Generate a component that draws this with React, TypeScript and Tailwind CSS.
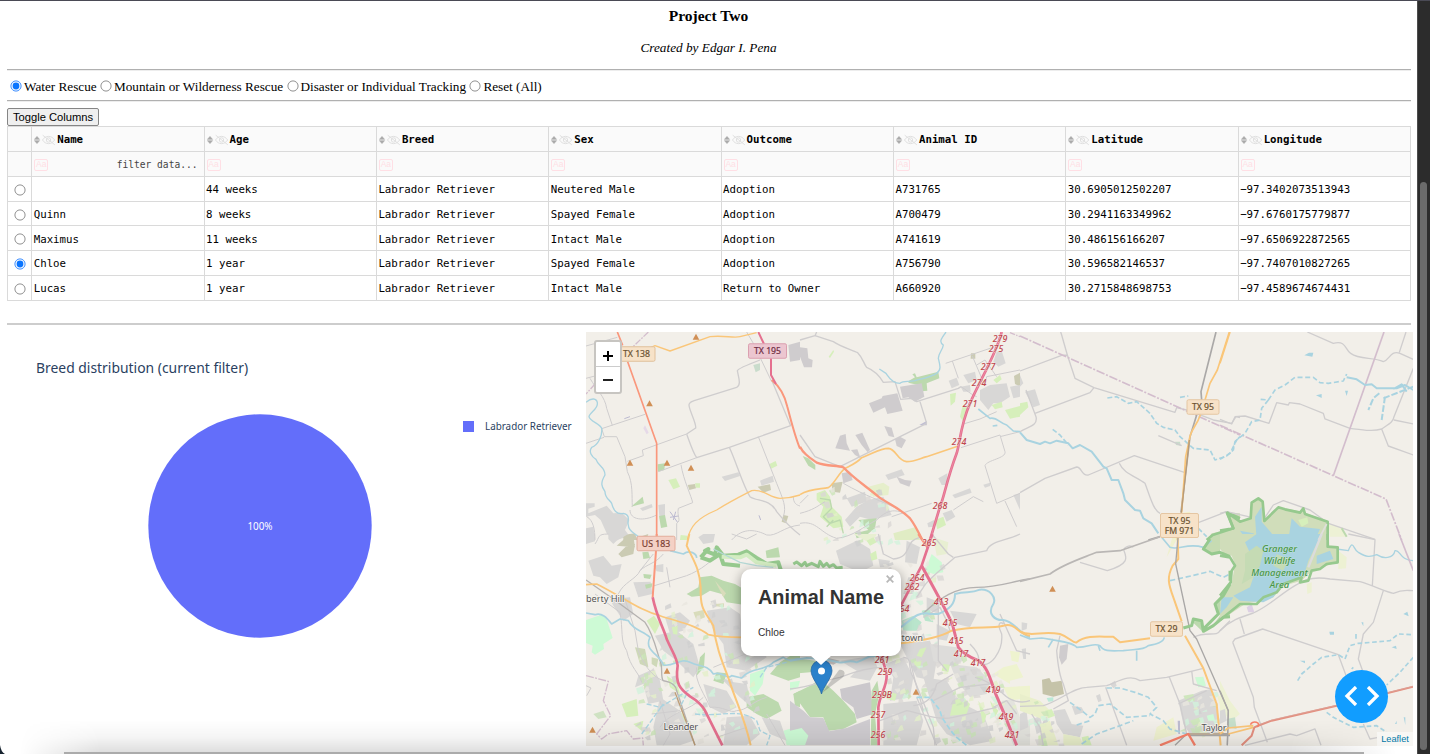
import React from 'react';

type Line = [string, string, number, string?];
type Area = [string, string];

const GREY = '#d8d7d6';
const DARKGREY = '#cfccce';
const GREEN = '#bcd9ae';
const LIME = '#d6efbb';
const MINT = '#cdfad5';
const KHAKI = '#cbcbb3';
const MINOR = '#cfcdce';
const WATER = '#a9d3e0';
const MOTOR = '#e5708f';
const TRUNK = '#fa977c';
const PRIM = '#fac679';
const ADMIN = '#d3bdcd';
const RAIL = '#a9a7a6';
const RESERVE = '#96c98e';

interface TileData {
  x: number;
  y: number;
  areas: Area[];
  lines: Line[];
}

const tiles: TileData[] = [
  {
    x: 580, y: 320,
    areas: [
      ['M625 75 660 65V120L630 125Z', DARKGREY],
      ['M520 135 540 130V150L527 157Z', '#c9dccc'],
      ['M233 433 255 430 253 450 234 455Z', GREEN],
      ['M265 480 288 475 300 500 280 508Z', LIME],
      ['M323 495 345 492 348 505 328 510Z', KHAKI],
      ['M345 490 360 490V503H348Z', LIME],
      ['M425 470 475 457 480 468 435 483Z', GREY],
      ['M540 482 578 467 582 485 545 497Z', GREY],
      ['M567 433 587 423 592 437 573 446Z', LIME],
      ['M533 500 570 493 573 510 550 518Z', KHAKI],
      ['M153 560 188 530 192 550Z', GREEN],
      ['M180 565 215 552 218 562 188 573Z', GREY],
      ['M235 555 255 552V590L238 588Z', GREY],
      ['M237 588 255 585 262 620 243 624Z', GREEN],
      ['M18 550 44 550V560L25 566V580L80 557 100 580 125 578 148 600 135 630 150 650 100 660 80 640 62 600 45 585 18 590Z', GREY],
      ['M18 625 40 620 45 660H18Z', GREY],
      ['M130 645 165 640 172 660H130Z', KHAKI],
      ['M610 585 625 588 618 610 605 605Z', KHAKI],
      ['M195 316 206 338 200 343 190 325Z', '#e6d9e8'],
      ['M302 645 322 647 320 660H300Z', LIME],
    ],
    lines: [
      ['M18 78 112 52M18 175 45 168M30 175C50 210 75 230 80 265L97 316M65 326 195 283M65 326 73 350H110L135 410 142 455C160 490 155 530 157 560M18 370 72 352M142 424 190 407 187 390 320 342', MINOR, 3],
      ['M320 342 347 324C350 310 327 270 327 255C327 245 335 245 345 241L470 202C485 195 475 170 472 152C475 145 500 135 540 120M320 342C330 370 340 400 350 413L448 382 632 317 575 180M448 382C470 430 490 500 510 530C530 545 570 535 590 575C610 600 640 630 660 645', MINOR, 4],
      ['M235 455 350 413M303 434C310 480 335 530 338 548L295 565C290 590 305 600 290 610V660M535 350 590 490C610 540 620 560 610 590M455 660C490 620 530 630 560 645C590 650 610 620 660 615M500 36 520 70 575 185M150 570C150 600 190 605 230 585M640 530C640 550 650 555 660 558M20 590C40 600 45 630 45 660', MINOR, 3],
      ['M18 247C35 232 50 235 52 248C55 268 30 275 27 290C30 305 60 310 65 325C68 345 55 375 35 382C25 395 35 410 48 418C55 440 75 440 75 465C60 490 65 500 75 515C75 535 90 540 95 550C100 570 110 585 130 580C155 585 140 605 145 615C145 635 165 640 175 650', WATER, 4],
      ['M205 36 155 84M45 192 18 222', ADMIN, 4, '20 4 5 4'],
      ['M195 90 225 77 270 93 390 50C430 45 460 55 480 50L530 38M322 660C330 620 350 595 410 570C450 545 490 525 515 512C550 505 570 535 600 535C630 535 645 530 660 525', PRIM, 4],
      ['M112 36 128 76M143 125 230 370V660', TRUNK, 5],
      ['M575 180C600 200 615 230 622 260 635 310 645 350 660 386', TRUNK, 6],
      ['M535 36 552 72M573 115V165L588 192', MOTOR, 6],
      ['M270 575 292 606M270 592 295 588M280 600 287 575M133 296 150 290M537 586 542 600', '#bbb9d0', 3],
    ],
  },
  {
    x: 800, y: 320,
    areas: [
      ['M0 82 22 85 25 115 38 120 36 142 12 142 0 110Z', DARKGREY],
      ['M86 110 100 90 102 95 90 114Z', LIME],
      ['M327 182 345 172 337 163 345 160 350 172 415 155 418 175 380 190 382 212 366 214 355 195 325 188Z', GREEN],
      ['M300 200 365 190 373 230 345 245 325 232 308 235Z', DARKGREY],
      ['M207 250 245 235 248 228 292 220 308 272 262 282 255 262 220 278Z', DARKGREY],
      ['M106 385 120 347 137 342 140 370 150 392Z', DARKGREY],
      ['M166 345 187 338 210 390 203 397 185 375Z', DARKGREY],
      ['M153 390 172 388 182 415 165 405Z', DARKGREY],
      ['M253 318 275 323 283 352 266 348Z', DARKGREY],
      ['M285 358 300 350 318 360 305 385 290 378Z', DARKGREY],
      ['M256 465 305 448 314 465 265 480Z', GREY],
      ['M290 470 315 480 335 482 328 500 300 490Z', DARKGREY],
      ['M358 315 380 303 380 316Z', '#bfbdd3'],
      ['M8 408 25 415 46 435 46 450 25 437Z', GREEN],
      ['M125 460 150 455 158 480 130 490Z', DARKGREY],
      ['M95 490 128 485 120 518 97 515Z', KHAKI],
      ['M50 520 75 510 90 530 95 560 125 590 130 620 100 625 60 590 70 560 50 540Z', LIME],
      ['M140 535 195 515 200 545 155 560Z', GREY],
      ['M205 540 250 530 275 585 215 600 180 590 150 620 135 600 170 560Z', GREY],
      ['M175 600 230 595 225 625 200 645 170 655 165 640 205 630Z', GREEN],
      ['M205 500 250 488 268 500 265 525 220 530Z', '#e6efcb'],
      ['M280 640 350 620 360 660H285Z', '#e0ecc4'],
      ['M446 182 470 173 478 195 455 205Z', GREY],
      ['M490 165 525 155 530 180 505 190Z', GREY],
      ['M482 200 510 195 512 215 490 215Z', GREY],
      ['M450 222 468 218 465 245 452 257Z', LIME],
      ['M487 260 505 255 490 305 480 290Z', LIME],
      ['M513 100 526 100V116H512Z', KHAKI],
      ['M590 95 605 92 617 130 595 140 580 125Z', GREY],
      ['M540 210 570 195 620 190 630 230 600 250 580 250 565 270 540 240Z', GREY],
      ['M580 180 600 165 605 178 590 190Z', LIME],
      ['M615 270 660 258V290L630 296Z', LIME],
      ['M575 255 605 245 608 262 585 268Z', LIME],
      ['M642 168 660 158V200L645 192Z', KHAKI],
      ['M630 200 660 195V230L640 235Z', GREY],
      ['M457 525 510 505 515 518 465 535Z', GREY],
      ['M415 475 442 460V495H425Z', GREY],
      ['M550 494 570 488V498L555 503Z', GREY],
      ['M405 600 430 590 438 615 412 628Z', LIME],
      ['M428 580 455 570 466 590 440 605Z', GREY],
      ['M382 610 402 600V620L385 622Z', GREY],
      ['M640 525 660 520V570Z', GREY],
    ],
    lines: [
      ['M0 60 45 47 100 65C130 85 160 90 173 98C190 115 190 130 200 142C220 150 240 170 250 187L285 185 302 238 335 235 350 245 475 205 483 200M45 47 50 36M0 345 45 410 120 440 350 325 380 310M360 245 380 310', MINOR, 4],
      ['M483 200C500 210 510 222 530 230M437 130 600 75M517 108 555 198 560 170 660 150M457 123 475 175M530 135 555 120 590 170M490 312 540 297 590 275M483 383 600 345 615 395C620 415 560 420 555 437L590 550 660 520M600 350 660 335M615 543 650 620M0 580C40 570 50 560 75 545M0 550 25 525M130 490C200 530 240 540 300 570M275 590 395 550M460 570 520 530 550 545M0 610C50 600 60 640 110 655 160 650 190 620 230 600 260 570 280 570 300 575', MINOR, 3],
      ['M438 36C425 55 415 65 430 75C428 90 415 100 415 115C420 135 425 150 410 160C390 172 370 175 345 182C325 187 310 180 300 190 275 190 265 170 258 160L238 147', WATER, 4],
      ['M535 267 570 295C590 290 600 310 620 315L640 333 660 335M578 318 592 316', WATER, 5],
      ['M60 535 90 540 95 565 70 590 90 610 120 600 130 640M80 620 100 600', GREEN, 4],
      ['M0 524C30 505 60 508 85 503C105 490 115 460 135 445C155 435 170 430 185 413C220 400 240 385 265 385C290 388 290 420 320 425C345 425 360 415 380 410L475 378', PRIM, 5],
      ['M0 380C10 400 25 410 50 428C80 440 110 435 130 442C160 475 200 500 235 530C270 555 300 565 330 595C345 615 355 635 367 660', TRUNK, 7],
      ['M605 36C590 100 540 180 510 250C480 320 480 370 470 400C440 480 430 540 420 560L390 660', MOTOR, 8],
      ['M605 36C590 100 540 180 510 250C480 320 480 370 470 400C440 480 430 540 420 560L390 660', '#f0a0b5', 1.5],
      ['M630 38 660 50', ADMIN, 4, '16 4 4 4'],
    ],
  },
  {
    x: 580, y: 534,
    areas: [
      ['M18 0H45V22L18 30ZM85 0H145L110 20 100 30 85 15ZM25 80 70 65 95 95 125 90 115 130 80 150 60 130 40 125Z', GREY],
      ['M115 60 140 35 165 30 160 60 125 70ZM180 8 205 0 200 15ZM110 35 150 0 160 5 165 40Z', KHAKI],
      ['M220 95 250 90V115L230 112ZM90 195 150 190 160 240 130 260 100 215ZM160 145 212 143 217 180 175 190Z', GREY],
      ['M18 258 65 242 80 255 98 312 70 330 72 345 45 362 35 355 38 335 18 327Z', MINT],
      ['M165 340 195 345 200 370 205 400 180 390ZM215 370 235 375 230 400 215 390Z', '#ced8b8'],
      ['M187 55 205 53 210 72 190 75ZM190 120 215 122 210 135 192 132ZM195 152 217 148 215 160 198 164Z', GREEN],
      ['M175 425 220 405 240 440 250 500 205 510 190 450 165 460Z', GREY],
      ['M225 305 290 290 340 330 360 400 340 430 290 380 250 350Z', GREY],
      ['M255 250 300 235 330 260 310 290 270 300Z', GREY],
      ['M380 230 450 220 480 240 490 330 430 330 400 290Z', GREY],
      ['M430 330 540 330 560 370 500 410 440 400Z', GREY],
      ['M355 10 370 0 405 0 400 25 370 30Z', GREY],
      ['M360 130 395 125 430 140 465 150 490 165V212L440 205 425 180 390 170 365 185 335 188 320 180 355 160Z', GREEN],
      ['M557 50 595 40 600 70 560 72ZM600 385 640 360H660V430L625 440 570 420Z', GREEN],
      ['M410 415 440 418 430 450 400 440ZM360 370 375 355 372 400 350 425ZM500 490 550 480 595 505 605 530 560 555 530 540 500 520ZM640 480 660 470V520L645 515Z', GREEN],
      ['M510 420 555 405 548 450 525 485 510 470Z', MINT],
      ['M610 590 660 575V634H620Z', MINT],
      ['M405 140 430 190 438 178ZM340 235 370 228 375 250 350 260ZM405 210 432 208V220L408 217Z', '#d9dcbb'],
      ['M200 260 222 245 240 270 225 300ZM125 510 170 495 175 545 140 550ZM275 280 293 275 292 302 280 300ZM260 425 290 445 300 480 270 460ZM270 540 300 530 320 560 290 570ZM160 570 190 560 185 590Z', LIME],
      ['M240 490 300 530 340 620 300 634H230L220 580ZM440 550 510 545 540 600 500 634H430ZM545 550 600 560 620 620 570 600Z', GREY],
      ['M370 450 440 470 470 520 430 540 390 520ZM430 440 500 450 515 520 480 490Z', GREY],
      ['M40 540 70 530 80 550 55 555Z', '#cfe2c2'],
    ],
    lines: [
      ['M45 30C60 10 50 0 85 0M115 180C130 145 170 135 180 110C200 90 225 90 250 60M130 180 165 290 175 350C190 390 220 440 270 445M45 180 120 235C130 290 120 320 140 350C150 400 180 420 185 445M220 156 320 125C360 110 400 80 420 50M455 0 500 15 530 0M18 455 33 462 20 485M260 100 270 160M180 110 220 60M350 400C340 440 380 490 390 520C430 515 450 540 470 530C500 530 520 500 560 490M240 500 270 600 250 634M215 540 300 530M400 400 520 350M560 540 615 634M410 610 500 580M240 580C260 540 330 530 370 490', MINOR, 3],
      ['M18 138 100 195 195 265C220 300 230 350 240 380C250 400 240 430 250 440C280 445 290 460 290 470L345 634', '#b5b2b0', 4],
      ['M285 475 345 634', '#bd9d76', 4],
      ['M18 237 45 242C65 235 80 250 95 270L120 255 145 260C160 290 190 290 210 310C190 350 240 360 250 393C280 400 300 370 330 385C360 400 380 390 400 420C430 410 440 440 455 425L485 432C510 400 560 410 580 385L610 370C640 390 640 370 660 375M270 50 310 60C330 45 350 60 350 72', WATER, 5],
      ['M200 510 240 520 340 460M185 600 250 510M345 540C420 550 480 520 530 560L540 590 570 605 560 634M320 480 300 520M540 430 560 400 620 385', WATER, 4, '15 6'],
      ['M362 70 385 45 375 50 405 62 410 40 430 65 475 62 500 52 530 72 560 90 595 85 603 110M362 70 390 80 420 60 430 90 480 95', RESERVE, 12],
      ['M425 68 480 70 500 62 530 85 590 95', '#d3ecc2', 12],
      ['M400 45 480 85 530 95 580 100', '#b5d9d6', 4],
      ['M18 425 85 442 70 500 92 545 50 600 65 615 85 600 140 590 160 615 188 612 190 634', ADMIN, 4, '24 4 6 4'],
      ['M18 152 50 150C130 190 180 230 240 245C300 265 350 275 385 302C420 310 450 310 485 310', PRIM, 5],
      ['M328 0 320 35C340 80 358 100 362 160C360 230 375 230 400 275C410 350 430 390 448 440C470 510 490 540 512 634', PRIM, 6],
      ['M228 50 218 190M230 0 230 8', TRUNK, 6],
      ['M218 190C230 250 250 280 260 315C280 360 290 370 293 395C285 450 300 465 330 487C360 505 370 520 375 530L427 634', MOTOR, 8],
    ],
  },
  {
    x: 790, y: 534,
    areas: [
      ['M138 50 200 20 240 45 250 95 210 115 150 90ZM265 75 300 80 295 100 270 100ZM350 20 390 40 380 90 345 85Z', GREY],
      ['M190 0 245 30 260 0ZM430 10 475 25 470 60 440 65Z', '#e8efd2'],
      ['M405 110 425 60 455 85 460 115 430 120Z', MINT],
      ['M230 20 250 10 260 25 240 35ZM240 60 258 50 262 75 245 80Z', LIME],
      ['M335 260 370 245 395 265 380 290 340 290ZM395 230 420 225 430 265 405 260Z', '#b9e5cc'],
      ['M355 130 380 130 370 180 340 180ZM410 190 450 205 445 240 410 225ZM440 270 480 290 470 320 440 315ZM480 230 560 240 540 280 500 270Z', GREY],
      ['M0 370 75 380 90 400 60 415 0 420ZM10 480 60 455 90 435 130 470 160 500 195 540 200 565 160 585 115 590 100 550 60 550Z', GREEN],
      ['M0 500 40 530 60 550 100 552 118 592 170 582 240 555V634H0Z', '#cfccd0'],
      ['M0 590 35 582 55 605 45 634H0Z', MINT],
      ['M150 465 240 445 250 540 200 555 190 520 155 495Z', '#cbc8cc'],
      ['M0 445 30 440 25 460 0 470Z', MINT],
      ['M150 380 250 365 262 400 240 440 180 430 200 410Z', GREY],
      ['M60 355 115 372 150 380 130 392 105 385 110 375Z', '#c5bdbb'],
      ['M255 540 268 480 262 440 245 470 242 634H262Z', GREEN],
      ['M285 390 340 370 370 430 360 490 300 500 310 430ZM280 510 380 500 400 560 380 634H280ZM330 330 420 320 440 380 430 440 380 430Z', GREY],
      ['M420 330 500 340 520 380 470 400 430 380ZM480 390 560 400 600 440 590 480 540 490 500 440Z', '#dddcda'],
      ['M400 430 470 440 500 490 540 520 580 540 610 620 540 634 470 600 440 560Z', GREY],
      ['M390 345 410 340 395 370 380 365ZM370 380 395 378 390 405 375 395ZM460 390 480 392 475 415 455 410ZM520 490 540 510 530 540 480 545 490 500ZM565 500 590 540 580 580ZM290 470 320 480 315 500 290 495ZM600 500 625 530 615 550Z', LIME],
      ['M610 420 640 400 680 390 700 430 660 440 660 450ZM660 350 690 355 685 385 665 380ZM640 460 720 455V490L660 500Z', '#eef3cf'],
      ['M635 500 670 495 690 550 720 560V634H670L640 560Z', '#e3e3dd'],
      ['M300 230 330 200 335 230Z', '#ced8b8'],
    ],
    lines: [
      ['M265 0 280 60 310 75C370 70 340 20 390 10M380 190 400 160C410 140 450 110 495 70L590 50C600 20 650 20 690 0M425 0 475 60 490 70M540 330C560 350 570 370 565 385C600 410 640 350 635 300C620 270 630 260 640 270M400 250 450 220 470 260 480 290M555 430C600 440 630 470 640 480C660 500 690 510 720 500M430 500 510 460 600 450M380 490 440 634M270 560 350 530C400 540 440 560 490 550L620 520M445 200V380L470 410M490 420 440 450C430 490 410 510 370 515M360 380 375 440 400 530M630 240 680 350 720 360', MINOR, 4],
      ['M0 465C60 460 100 440 150 430 200 410 250 400 275 400M340 370C370 370 350 400 370 430L430 580 435 634M610 520 650 500 680 540', MINOR, 4],
      ['M398 240C450 190 500 160 560 160C630 160 670 140 720 135', '#b4b1b0', 4],
      ['M0 380 50 372 100 375 145 385C170 390 170 375 200 385 240 370 230 365 260 367M333 280C370 250 390 230 420 240L445 240C480 225 495 210 495 180C530 170 540 180 570 167C600 165 620 190 610 210C590 240 615 260 640 258C670 260 690 300 720 310', WATER, 6],
      ['M380 490 420 490C440 520 450 520 455 550C470 570 480 590 500 610L530 634', '#a3d8e6', 5, '16 7'],
      ['M333 328C400 320 450 310 485 290C550 275 600 285 640 275C680 265 680 300 720 305', PRIM, 6],
      ['M385 0 412 40', TRUNK, 7],
      ['M427 0 395 95 333 215', MOTOR, 8],
      ['M395 95C430 160 470 230 487 270L505 340C520 360 540 370 565 380C590 395 600 430 615 475L645 545 680 634', MOTOR, 9],
      ['M275 367C280 390 290 410 290 425C290 460 270 480 265 520L266 634', MOTOR, 8],
      ['M10 90 20 84 35 95 45 85 50 95 65 88 85 98 90 82 100 97 110 88 118 98 130 92 140 102 158 100', RESERVE, 9],
    ],
  },
  {
    x: 1020, y: 320,
    areas: [
      ['M0 165 10 190 0 200ZM15 215 45 208 60 255 40 262Z', GREY],
      ['M0 250 22 245 25 262 0 285Z', LIME],
      ['M465 365 480 365 482 377 468 375Z', '#c9dccc'],
      ['M575 640 630 630 640 620 620 577 660 580V660H560Z', '#d0ddba'],
      ['M490 578 510 575 515 590H490Z', '#f3f1c9'],
    ],
    lines: [
      ['M0 153 125 106 142 105 125 45 122 36M142 105 165 175 222 203 465 277 470 263 500 270 580 300 635 310 648 290 660 293M222 203 210 218 45 280M18 210 48 290C55 320 20 320 0 335M0 518 75 475 170 441C185 440 185 470 205 465L343 407 495 458M298 430C310 460 350 470 375 490C390 530 400 570 420 580M415 347 485 377M537 607 620 575', MINOR, 4],
      ['M0 48 660 345', ADMIN, 5, '26 5 6 5'],
      ['M0 337 20 360 60 372 75 365 90 370 110 362 145 370 158 385 180 375 215 395 250 440 260 445 275 480 295 480 310 520 315 540 330 555 345 570 360 572 370 595 395 610 415 640', WATER, 6],
      ['M98 328 120 345 145 375M262 234 290 230 325 250 350 245 390 280 410 310 430 322 465 330 480 350 520 385 570 390 585 420 620 408 640 390 645 365 660 350M480 232 505 228M535 625 560 650', WATER, 5, '15 7'],
      ['M588 36 543 215 545 240M530 285 510 350 483 578', '#aaa8a7', 5],
      ['M628 36 592 150 570 190 555 240M541 284C530 320 510 330 508 360L497 410 485 578M473 650V660', PRIM, 5],
      ['M508 360 484 578', '#b89a76', 4],
      ['M385 660 420 650', RAIL, 5],
      ['M660 595 620 577 640 625 578 645 560 660', RESERVE, 8],
    ],
  },
  {
    x: 1220, y: 320,
    areas: [
      ['M0 630 40 625 22 578 60 605 92 595 95 548 115 535 130 545 133 603 175 562 250 575 323 605V660H0Z', '#d0ddba'],
      ['M105 590 125 560 125 605 155 640 160 660H110ZM60 632 100 640 120 660H80ZM215 595 240 620 300 627 285 660H205Z', WATER],
      ['M235 600 262 592 265 610 245 620Z', LIME],
      ['M325 610 365 625 380 650 330 650Z', '#edf1d5'],
      ['M253 106 267 98H280L277 110ZM288 226 305 222V234ZM375 212 384 212 380 228Z', WATER],
    ],
    lines: [
      ['M262 36 340 70C380 60 375 90 392 100C420 120 460 110 490 125 510 120 510 90 540 100L580 118M538 97 558 36M0 298 35 312 45 290 75 288 147 310 170 248 205 255 208 248 240 252 310 280 315 297 390 325C430 330 460 335 485 327C510 310 520 305 522 290L580 145M485 327 505 378 580 405M522 300 580 312M130 600 160 555 190 542 270 570 325 610 465 658M0 580 20 575 95 592', MINOR, 4],
      ['M492 36 340 467', ADMIN, 5],
      ['M0 316 340 467 498 537 545 660', ADMIN, 5, '26 5 6 5'],
      ['M0 418 30 400 50 360 75 340 95 305 120 300 125 265 145 240 120 238M145 240 165 210 195 195 225 172 280 172 300 188 325 190 370 183 380 162', WATER, 5, '15 8'],
      ['M380 172 410 178 435 195 455 193 470 205 530 205 555 195 580 210M520 207 545 193 560 215', WATER, 6],
      ['M478 220 460 235 445 270M495 230 485 300M490 235 580 200', WATER, 6, '20 6'],
      ['M0 632 40 625 22 578 60 605 92 595 95 548 115 535 128 545 133 603 175 562 195 568 240 578 250 565 255 582 323 605V660', RESERVE, 8],
      ['M320 612 295 660', '#e0dfdc', 5],
      ['M0 130 30 36', PRIM, 5],
      ['M365 625 380 650', GREEN, 6],
    ],
  },
  {
    x: 1020, y: 534,
    areas: [
      ['M575 0H630V65L600 55 570 60 550 45Z', '#c6dbb2'],
      ['M120 335 145 330 140 375 125 392 117 370Z', DARKGREY],
      ['M66 437 88 432 95 445 125 440 132 480 100 488 68 480Z', '#c5c3a9'],
      ['M80 492 100 490V502L85 503Z', '#bce9d8'],
      ['M5 265 22 268 20 285 5 290ZM5 345 18 343V375H10Z', GREY],
      ['M0 540 20 530 25 580 0 590ZM40 555 60 545 70 590 50 600ZM100 530 135 525 155 570 190 575 180 610 130 600 110 570ZM155 515 185 520 193 535 165 543ZM228 485 240 480 245 500 235 505ZM270 450 285 440 290 455 280 463Z', GREY],
      ['M0 480 60 500 90 530 80 560 0 530ZM60 570 90 560 115 634H70ZM130 600 180 610 190 634H130Z', '#e9efcb'],
      ['M75 530 95 525 105 545 85 553ZM55 605 75 600 80 634H55ZM185 610 205 605 215 634H190Z', LIME],
      ['M475 500 545 470 575 465 600 560 595 600 510 600 490 570Z', GREY],
      ['M525 430 550 428 558 455 535 460ZM560 545 580 540 585 560 565 560Z', MINT],
      ['M490 485 520 480 525 500 500 505ZM510 560 540 550 550 565 520 575Z', '#cfe6bd'],
      ['M410 580 460 550 470 600 400 620ZM590 480 615 500 610 550ZM440 70 480 0 460 0Z', '#eff1cf'],
      ['M473 560 480 560V600H475Z', '#bdbcd0'],
      ['M515 262 545 260 550 290 580 272 600 245 585 215 605 185 630 150V245L600 255 550 295Z', GREEN],
    ],
    lines: [
      ['M180 85 262 110C330 90 320 70 312 50C310 40 330 30 340 40M0 517 70 515C120 500 160 460 200 460L260 455C300 440 330 420 360 440L440 430 550 403M120 305 110 350C115 410 125 440 130 450L145 500 100 525M257 460 320 634M447 427 480 510 500 600M515 410 520 450 590 470M475 510 560 470M520 310C560 290 590 310 600 290L630 260M35 540 60 580 70 634', MINOR, 4],
      ['M0 142 90 120C130 90 180 75 230 55L300 50 420 8', '#bab7b5', 5],
      ['M0 303 30 315 65 312C110 320 160 325 170 340C210 340 220 325 240 335 250 355 280 350 310 350 340 345 370 350 385 335C410 330 430 325 433 310M350 350V380M235 335 240 350M100 315 85 340M425 10 450 40C480 50 500 25 550 40L575 20', WATER, 5],
      ['M450 140 495 130 570 112 610 130 630 120M260 462 300 462 345 475 385 490 410 520 390 540 430 560 450 585 500 600M150 505 185 530 210 550 225 540 235 515 270 510 320 550 390 545M170 573 210 560M185 630 230 600 300 575 340 560', WATER, 5, '16 8'],
      ['M0 292C40 310 60 290 120 300C150 310 160 330 170 325C200 300 250 310 280 308L300 325 390 313', PRIM, 6],
      ['M473 8 475 75 458 95C440 130 445 150 460 190L485 262M495 305 550 403 590 510 602 634M505 600H620', PRIM, 6],
      ['M475 0 467 90 510 290 530 315 625 530 622 634M465 634 500 600 630 600M510 605 630 605', RAIL, 4],
      ['M420 634 505 600 525 634', '#f78169', 7],
      ['M490 282 515 275 520 255 545 260 550 292 580 275 610 250 630 248M550 285 570 265 595 240 585 210 610 185 630 150M570 15 550 45 575 60 600 55 630 68M630 110V140', RESERVE, 9],
    ],
  },
  {
    x: 1220, y: 534,
    areas: [
      ['M0 0H325L328 35 355 40 353 85 275 110 245 140 190 155 160 190 75 210 0 260V185L35 150 45 90 35 65 0 50Z', '#d0ddba'],
      ['M75 25 110 0H305L265 80 250 130 190 150 160 190 130 205 60 200 40 185 90 160 110 100Z', WATER],
      ['M75 60 110 35 130 50 120 95 100 130 65 150 75 110ZM170 60 205 75 190 110 160 95Z', '#c5dbb4'],
      ['M5 190 40 190 20 220 0 240ZM290 65 330 50 340 75 290 90Z', WATER],
      ['M0 45 40 90 30 140 0 180Z', '#f2efe9'],
      ['M355 50 380 70 378 103 355 105ZM260 150 275 145V175L262 180ZM0 440 30 500 60 540 35 560 0 530Z', '#edf1d3'],
      ['M80 220 95 210 103 235 85 235Z', '#ddd0e4'],
      ['M20 555 45 550 50 585 25 580Z', '#c6dfca'],
      ['M0 530 15 525 20 560 0 570Z', GREY],
      ['M328 293H342V302H330ZM240 380H255V388ZM550 240 562 233 566 247ZM515 340 528 335 530 345ZM424 265H430V277ZM525 570H530V560ZM551 550H556V573Z', WATER],
    ],
    lines: [
      ['M0 290C30 260 60 250 100 237C150 215 180 180 230 152C260 130 300 130 330 135L420 143C460 155 500 175 520 178C550 165 560 170 580 170M385 0 465 17 457 155M490 170 460 265 430 300 415 375 435 430M60 255 73 300M38 325 45 315 128 285 355 362 380 430M38 325 100 490 103 520 142 625M75 634 210 600 230 605 285 585 303 634M430 570 450 615 475 610', MINOR, 4],
      ['M350 45 385 50C400 10 400 50 415 55C440 70 450 70 470 62C490 75 520 75 525 50C540 45 540 80 580 80', WATER, 4],
      ['M233 440 245 420 280 390 305 370 355 362 375 375 390 335 415 328 455 325 510 320 535 300 580 302M580 370 540 415 500 453M320 535 340 550 400 580 470 575 500 595M408 300V315M395 405 400 400', WATER, 5, '14 8'],
      ['M537 0 580 110', ADMIN, 5],
      ['M323 0V38L353 40V85L320 90 300 105 275 110 265 140 240 145 245 130 190 150 170 175 130 190 110 210 60 210 0 258M0 65 30 70 45 95 35 110 32 145 0 185', RESERVE, 8],
      ['M305 0 265 100', '#dbdcdd', 7],
      ['M0 470 25 530 22 634M0 600H30', RAIL, 4],
      ['M0 600 25 582 100 575M25 600 100 580', PRIM, 5],
      ['M65 634 95 605 103 580 112 576 155 560 350 515 580 458', '#e48f7f', 6],
      ['M112 575 155 558 350 514 580 457', '#d9a69d', 2],
      ['M92 572A12 8 0 1 1 112 578', '#f78169', 5],
    ],
  },
];

function makeBlocks() {
  let s = 41;
  const rnd = () => {
    s = (s * 16807) % 2147483647;
    return s / 2147483647;
  };
  const zones = [
    [636, 655, 120, 85, 95], [880, 655, 120, 85, 130], [880, 560, 60, 85, 50],
    [660, 600, 75, 60, 40], [820, 485, 75, 60, 35], [990, 700, 70, 44, 30], [1180, 692, 35, 40, 25],
  ];
  const colors = ['#cfcfcf', '#d9d7d5', '#e3efc9', '#cbe5b8', '#e9e6df', '#d2f3dc'];
  return zones.flatMap(([x, y, w, h, n]) =>
    Array.from({ length: n }, () => {
      const px = x + rnd() * w;
      const py = y + rnd() * h;
      return {
        d: `M${px.toFixed(1)} ${py.toFixed(1)}l${(2 + rnd() * 5).toFixed(1)} ${(-rnd() * 3).toFixed(1)}l${(rnd() * 2).toFixed(1)} ${(2 + rnd() * 4).toFixed(1)}l${(-2 - rnd() * 5).toFixed(1)} ${(rnd() * 3).toFixed(1)}Z`,
        c: colors[Math.floor(rnd() * colors.length)],
      };
    }),
  );
}
const blocks = makeBlocks();

const exits: [string, number, number][] = [
  ['279', 1000, 341.5], ['275', 996, 351.5], ['277', 988, 370], ['274', 979, 386], ['271', 970, 407],
  ['274', 959, 445], ['268', 940, 509], ['265', 929, 546], ['264', 917, 580.5], ['262', 912, 590],
  ['264', 902, 612], ['413', 941, 605], ['415', 950, 626], ['415', 956, 644], ['417', 961, 657], ['417', 978, 666],
  ['419', 993, 693], ['419', 1006, 720], ['421', 1012, 738], ['261', 882, 663], ['259', 885, 675],
  ['259B', 882, 698], ['257', 878, 718], ['256', 878, 738],
];

const peaks: [number, number][] = [
  [696, 337], [649.5, 403.5], [630, 463], [667, 463], [691, 468], [667, 671], [592.5, 730], [916, 692], [1052.5, 589],
];

interface ShieldProps { x: number; y: number; w: number; lines: string[]; bg: string; edge: string; ink: string }
function Shield({ x, y, w, lines, bg, edge, ink }: ShieldProps) {
  const h = lines.length === 1 ? 14.5 : 24;
  return (
    <g>
      <rect x={x - w / 2} y={y - h / 2} width={w} height={h} rx={1.5} fill={bg} stroke={edge} />
      {lines.map((t, i) => (
        <text key={t} x={x} y={y + 3 + (i - (lines.length - 1) / 2) * 10} fontSize={8.7} textAnchor="middle" fill={ink} stroke={ink} strokeWidth={0.2}>{t}</text>
      ))}
    </g>
  );
}

function MapCanvas() {
  return (
    <svg viewBox="586 332 828 414" width={828} height={414} className="block bg-[#f2efe9] font-['Noto_Sans',sans-serif]">
      {tiles.map((t) => (
        <g key={`a${t.x}-${t.y}`} transform={`translate(${t.x} ${t.y}) scale(0.33333)`}>
          {t.areas.map(([d, c], i) => <path key={i} d={d} fill={c} />)}
        </g>
      ))}
      {blocks.map((b, i) => <path key={i} d={b.d} fill={b.c} opacity={0.8} />)}
      {tiles.map((t) => (
        <g key={`l${t.x}-${t.y}`} transform={`translate(${t.x} ${t.y}) scale(0.33333)`} fill="none" strokeLinejoin="round">
          {t.lines.map(([d, c, w, dash], i) => <path key={i} d={d} stroke={c} strokeWidth={w} strokeDasharray={dash} />)}
        </g>
      ))}
      {peaks.map(([x, y], i) => <path key={i} d={`M${x} ${y - 3.2}L${x + 3.3} ${y + 2.8}H${x - 3.3}Z`} fill="#d08f55" />)}
      <g fontSize={8.8} fontStyle="italic" fontWeight={500} textAnchor="middle" fill="#c0454d" stroke="#f2efe9" strokeWidth={0.6} paintOrder="stroke">
        {exits.map(([t, x, y], i) => <text key={i} x={x} y={y}>{t}</text>)}
      </g>
      <Shield x={636.5} y={354} w={37} lines={['TX 138']} bg="#f7e2c8" edge="#e0c09b" ink="#6b5231" />
      <Shield x={767.5} y={351} w={38} lines={['TX 195']} bg="#ecc6d0" edge="#dba0b0" ink="#6f2d43" />
      <Shield x={656} y={543.5} w={38} lines={['US 183']} bg="#f4d1c5" edge="#e3ac9b" ink="#7a3d32" />
      <Shield x={1203} y={407} w={32} lines={['TX 95']} bg="#f7e2c8" edge="#e5c6a2" ink="#6b5231" />
      <Shield x={1179.5} y={525.5} w={38} lines={['TX 95', 'FM 971']} bg="#f7e2c8" edge="#e5c6a2" ink="#6b5231" />
      <Shield x={1166.5} y={629} w={32} lines={['TX 29']} bg="#f7e2c8" edge="#e5c6a2" ink="#6b5231" />
      <g fontSize={9.3} fill="#555" stroke="#f6f4f0" strokeWidth={1.5} paintOrder="stroke">
        <text x={586} y={602} textLength={38.5}>berty Hill</text>
        <text x={663.5} y={730} textLength={34.5}>Leander</text>
        <text x={901.5} y={641} textLength={21.5}>town</text>
        <text x={1201.5} y={731} textLength={25}>Taylor</text>
      </g>
      <g fontSize={9.4} fontStyle="italic" fontWeight={500} textAnchor="middle" fill="#46964c" stroke="#d9ead9" strokeWidth={0.5} paintOrder="stroke">
        <text x={1279.5} y={552}>Granger</text>
        <text x={1279.5} y={564}>Wildlife</text>
        <text x={1279.5} y={576}>Management</text>
        <text x={1279.5} y={587.5}>Area</text>
      </g>
    </svg>
  );
}

const columns = ['Name', 'Age', 'Breed', 'Sex', 'Outcome', 'Animal ID', 'Latitude', 'Longitude'];
const rows = [
  ['', '44 weeks', 'Labrador Retriever', 'Neutered Male', 'Adoption', 'A731765', '30.6905012502207', '−97.3402073513943'],
  ['Quinn', '8 weeks', 'Labrador Retriever', 'Spayed Female', 'Adoption', 'A700479', '30.2941163349962', '−97.6760175779877'],
  ['Maximus', '11 weeks', 'Labrador Retriever', 'Intact Male', 'Adoption', 'A741619', '30.486156166207', '−97.6506922872565'],
  ['Chloe', '1 year', 'Labrador Retriever', 'Spayed Female', 'Adoption', 'A756790', '30.596582146537', '−97.7407010827265'],
  ['Lucas', '1 year', 'Labrador Retriever', 'Intact Male', 'Return to Owner', 'A660920', '30.2715848698753', '−97.4589674674431'],
];

function Radio({ on }: { on?: boolean }) {
  return (
    <svg viewBox="0 0 12 12" className="h-3 w-3 shrink-0">
      <circle cx="6" cy="6" r="5.1" fill="#fff" stroke={on ? '#2680ff' : '#858585'} strokeWidth="0.9" />
      {on && <circle cx="6" cy="6" r="3.4" fill="#0a75ff" />}
    </svg>
  );
}

function HeaderIcons() {
  return (
    <svg viewBox="0 0 22 12" className="h-3 w-[22px] shrink-0" fill="none">
      <path d="M0.2 5.4 3 2.2 5.8 5.4ZM0.2 6.6 3 9.8 5.8 6.6Z" fill="#aaa" stroke="#aaa" strokeWidth="0.3" strokeLinejoin="round" />
      <path d="M8.5 6C10 3.6 12 2.4 14.5 2.4S19 3.6 20.7 6C19 8.4 17 9.6 14.5 9.6S10 8.4 8.5 6ZM14.5 3.8A2.2 2.2 0 1 1 14.5 8.2 2.2 2.2 0 0 1 14.5 3.8ZM8.7 1.2 20.8 10.8" stroke="#e0e0e0" strokeWidth="1" />
    </svg>
  );
}

const cell = 'flex items-center overflow-hidden whitespace-nowrap border-r border-b border-[#dadada]';
const grid = 'grid h-[24.86px] grid-cols-[24.2px_repeat(8,minmax(0,1fr))]';

export default function App() {
  const filters = ['Water Rescue', 'Mountain or Wilderness Rescue', 'Disaster or Individual Tracking', 'Reset (All)'];
  return (
    <div className="relative flex h-[754px] w-[1430px] overflow-hidden border-t border-[#4a4a55] bg-white text-black">
      <main className="flex w-[1417px] flex-col pl-[7px] font-['Liberation_Serif',serif]">
        <h3 className="mt-[4px] h-[21px] w-[1403px] text-center text-[15.5px] leading-[21px] font-bold">Project Two</h3>
        <p className="mt-[13px] h-[18px] w-[1403px] text-center text-[13.25px] leading-[18px] italic">Created by Edgar I. Pena</p>
        <div className="mt-[12px] h-[2px] w-[1404px] border-t border-[#b0b0b0] border-b border-b-[#ededed]" />
        <div className="flex h-[29px] items-center gap-[3.3px] pl-[3px] pt-[2px] text-[13.23px]">
          {filters.map((f, i) => (
            <label key={f} className="flex items-center gap-[2px] whitespace-nowrap"><span className="-mt-[2px]"><Radio on={i === 0} /></span>{f}</label>
          ))}
        </div>
        <div className="h-[2px] w-[1404px] border-t border-[#b0b0b0] border-b border-b-[#ededed]" />
        <button className="mt-[6px] h-[18px] w-[92px] rounded-[2px] border border-[#858585] bg-[#efefef] p-0 font-['Liberation_Sans',sans-serif] text-[11.2px] leading-[17px] whitespace-nowrap">Toggle Columns</button>
        <section className="w-[1404px] border-t border-l border-[#dadada] font-['DejaVu_Sans_Mono',monospace] text-[10.75px]">
          <div className={`${grid} bg-[#fafafa] font-bold`}>
            <div className={cell} />
            {columns.map((c) => <div key={c} className={`${cell} gap-px pt-[3px] pl-[2px]`}><HeaderIcons /><span>{c}</span></div>)}
          </div>
          <div className={`${grid} bg-[#fafafa]`}>
            <div className={cell} />
            {columns.map((c, i) => (
              <div key={c} className={`${cell} justify-between pt-[2px] pr-[6px] pl-[2px]`}>
                <span className="flex h-3 w-[14px] items-center justify-center rounded-[2px] border border-[#ffdfe5] font-['Liberation_Sans',sans-serif] text-[8.5px] text-[#ffdfe5]">Aa</span>
                {i === 0 && <span className="text-[9.6px] text-[#444]">filter data...</span>}
              </div>
            ))}
          </div>
          {rows.map((r, i) => (
            <div key={r[5]} className={grid}>
              <div className={`${cell} pt-[2px] pl-[5.5px]`}><Radio on={i === 3} /></div>
              {r.map((v, j) => <div key={j} className={`${cell} pt-[2.6px] pl-[1.5px]`}>{v}</div>)}
            </div>
          ))}
        </section>
        <div className="mt-[21.5px] h-[2px] w-[1404px] shrink-0 bg-[#cdcdcd]" />
        <div className="mt-[7px] flex h-[414px] w-[1406px] shrink-0">
          <section className="flex w-[579px] shrink-0 flex-col font-['Noto_Sans',sans-serif] text-[#2a3f5f]">
            <h4 className="mt-[26px] ml-[29px] h-[20px] text-[13.9px] leading-[20px]">Breed distribution (current filter)</h4>
            <div className="mt-[36px] flex">
              <svg viewBox="0 0 224 224" className="ml-[141px] h-[224px] w-[224px]">
                <circle cx="112" cy="112" r="111.7" fill="#636efa" />
                <text x="112" y="116" textAnchor="middle" fontSize="9.9" fill="#fff">100%</text>
              </svg>
              <div className="mt-[5px] ml-[91px] flex h-4 items-center text-[9.85px] whitespace-nowrap">
                <span className="mr-[11px] h-[11px] w-[11px] bg-[#636efa]" />Labrador Retriever
              </div>
            </div>
          </section>
          <section className="relative h-[414px] w-[827px] shrink-0 overflow-hidden font-['Liberation_Sans',sans-serif]">
            <MapCanvas />
            <div className="absolute top-[8px] left-[8px] flex h-[54px] w-[28px] flex-col rounded-[3px] border-2 border-[#c7c5c1] bg-white">
              <div className="relative flex-1 border-b border-[#ccc]"><i className="absolute top-[13px] left-[7px] h-[2px] w-[10px] bg-black" /><i className="absolute top-[9px] left-[11px] h-[10px] w-[2px] bg-black" /></div>
              <div className="relative flex-1"><i className="absolute top-[12px] left-[7px] h-[2px] w-[10px] bg-[#222]" /></div>
            </div>
            <svg viewBox="0 0 40 50" className="absolute top-[320px] left-[223px] h-[50px] w-[40px]">
              <path d="M13 41 30 18C35 17 38 22 33 26Z" fill="#555" opacity="0.28" />
              <path d="M12.5 42C11 35 2 26 2 18.5A10.5 10.5 0 0 1 23 18.5C23 26 14 35 12.5 42Z" fill="#2a81cb" stroke="#2868a5" strokeWidth="0.8" />
              <circle cx="12.5" cy="19" r="3.5" fill="#fff" />
            </svg>
            <div className="absolute top-[237px] left-[155px] h-[87px] w-[160px] rounded-[10px] bg-white pt-[15px] pl-[17px] text-[#333] shadow-[0_3px_12px_rgba(0,0,0,0.4)]">
              <svg viewBox="0 0 24 10" className="absolute top-[86px] left-[68px] h-[10px] w-[24px]"><path d="M1 0H23L12 10Z" fill="#fff" /></svg>
              <svg viewBox="0 0 8 8" className="absolute top-[6px] right-[7px] h-2 w-2"><path d="M.7.7 7.3 7.3M7.3.7.7 7.3" stroke="#b8b8b8" strokeWidth="1.8" /></svg>
              <h1 className="h-[26px] text-[19.9px] leading-[27px] font-bold whitespace-nowrap">Animal Name</h1>
              <p className="mt-[16px] h-[14px] text-[10.2px] leading-[14px]">Chloe</p>
            </div>
            <div className="absolute right-0 bottom-0 h-[14px] w-[36px] bg-[#f8f7f4] text-center text-[9.2px] leading-[14px] text-[#0078a8]">Leaflet</div>
            <div className="absolute top-[338px] left-[749px] flex h-[53px] w-[53px] items-center justify-center rounded-full bg-[#119dff]">
              <svg viewBox="0 0 36 20" className="h-5 w-9" fill="none" stroke="#fff" strokeWidth="3.3"><path d="M12 1 3 10 12 19M24 1 33 10 24 19" /></svg>
            </div>
          </section>
        </div>
      </main>
      <aside className="flex w-[13px] justify-center border-l border-[#4c4c4c] bg-[#2c2c2c] pr-px">
        <div className="mt-[181px] h-[568px] w-[7px] rounded-full bg-[#6b6b6b]" />
      </aside>
      <div className="pointer-events-none absolute bottom-0 left-[20px] h-[34px] w-[1376px] bg-linear-to-b from-transparent via-black/4 to-black/14 [mask-image:linear-gradient(to_right,transparent,black_80px,black_1270px,transparent)]" />
      <div className="pointer-events-none absolute bottom-0 left-[64px] h-[2px] w-[1300px] bg-[#ababab]" />
      <svg viewBox="0 0 5 9" className="absolute bottom-0 left-0 h-[9px] w-[5px]"><path d="M0 0Q1 7 5 9H0Z" fill="#17232f" /></svg>
    </div>
  );
}
